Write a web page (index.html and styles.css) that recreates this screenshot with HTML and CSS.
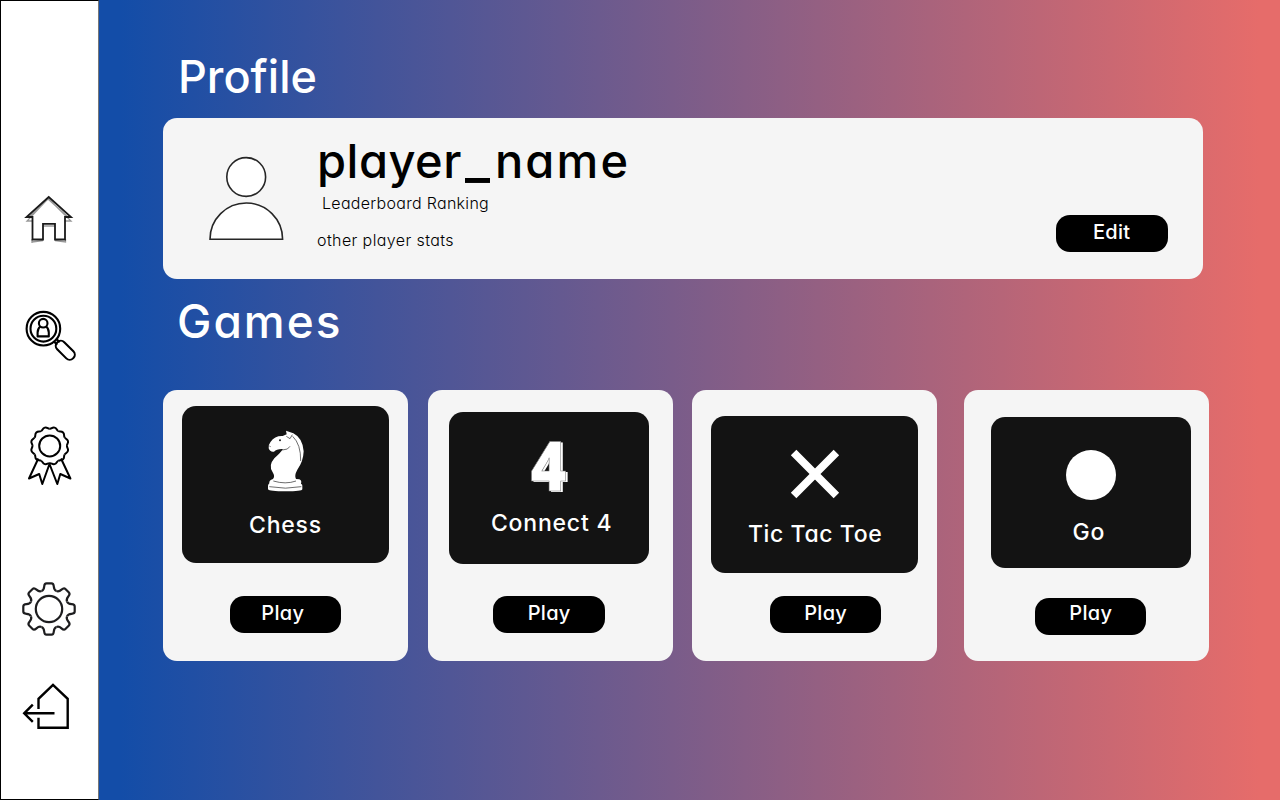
FILE: index.html
```html
<!DOCTYPE html>
<html lang="en">
<head>
<meta charset="utf-8">
<title>Profile</title>
<link rel="stylesheet" href="styles.css">
</head>
<body>
<nav class="sidebar">
  <a class="nav-home"><svg width="50" height="50" viewBox="24 195 50 50"><g fill="none" stroke="#999" stroke-width="1.300"><path d="M48.700 198 27 221h6M48.700 199 71 221h-6M32 242l11-1.500M55 240.500 65.500 242V239M32 239v4M43 226h12M29 217l19-18 20 18"/></g><path d="M48.700 197 71 217H65V239.500H55V223.800H43V239.500H32.500V217H26.500Z" fill="none" stroke="#1a1a1a" stroke-width="1.800"/></svg></a>
  <a class="nav-search"><svg width="54" height="54" viewBox="24 309 54 54"><g fill="none" stroke="#000" stroke-width="2.100"><circle cx="43.400" cy="328.700" r="16.800"/><circle cx="43.400" cy="328.700" r="12.900"/><circle cx="43.200" cy="323.200" r="4.300"/><path d="M40.300 326.500Q37.600 328.600 37.600 332.500V336.400H48.800V332.500Q48.800 328.600 46.100 326.500" stroke-linejoin="round"/><rect x="58" y="-5" width="22.500" height="10" rx="4.800" transform="translate(15.600 300.600) rotate(45) translate(1 0)"/><path d="M54.200 341.800l3 3M56.700 339.300l3 3"/></g></svg></a>
  <a class="nav-awards"><svg width="46" height="62" viewBox="27 425 46 62"><defs><path id="scallop" d="M-4.480-16.700C-2.500-16.900-2.600-18.900 0-18.900S2.500-16.900 4.480-16.700"/></defs><g fill="none" stroke="#000" stroke-width="2" stroke-linejoin="round"><circle cx="49.700" cy="445.900" r="10.500"/><g transform="translate(49.700 445.900)"><use href="#scallop" transform="rotate(15)"/><use href="#scallop" transform="rotate(45)"/><use href="#scallop" transform="rotate(75)"/><use href="#scallop" transform="rotate(105)"/><use href="#scallop" transform="rotate(135)"/><use href="#scallop" transform="rotate(165)"/><use href="#scallop" transform="rotate(195)"/><use href="#scallop" transform="rotate(225)"/><use href="#scallop" transform="rotate(255)"/><use href="#scallop" transform="rotate(285)"/><use href="#scallop" transform="rotate(315)"/><use href="#scallop" transform="rotate(345)"/></g><path d="M38.300 458.500 29 478.500 39.200 474 42.300 484 49.500 464 57.300 484 60.300 474 70.400 478.500 61 458.500"/></g></svg></a>
  <a class="nav-settings"><svg width="56" height="56" viewBox="-28 -28 56 56"><defs><path id="tooth" d="M-7.460-18.020C-5.500-18.800-5-20-4.800-22.500Q-4.600-25.700-2.500-25.700H2.500Q4.600-25.700 4.800-22.500C5-20 5.500-18.800 7.460-18.020"/></defs><g fill="none" stroke="#1d1d1f" stroke-width="2.200"><circle r="13.200"/><use href="#tooth"/><use href="#tooth" transform="rotate(45)"/><use href="#tooth" transform="rotate(90)"/><use href="#tooth" transform="rotate(135)"/><use href="#tooth" transform="rotate(180)"/><use href="#tooth" transform="rotate(225)"/><use href="#tooth" transform="rotate(270)"/><use href="#tooth" transform="rotate(315)"/></g></svg></a>
  <a class="nav-exit"><svg width="50" height="50" viewBox="21 681 50 50"><path d="M38.500 709V698.800L53 684.800 67.700 698.800V727.800H38.500V717.800M54.500 713.300H24.500M32.800 704.700 24.200 713.300 32.800 721.900" fill="none" stroke="#000" stroke-width="2.400"/></svg></a>
</nav>
<main class="content">
  <h1 class="heading heading-profile">Profile</h1>
  <section class="profile">
    <svg class="avatar" width="76" height="86" viewBox="208 155 76 86"><g fill="#fff" stroke="#262626" stroke-width="1.600"><circle cx="246.200" cy="177" r="19.400"/><path d="M210 239.300A36.300 36.300 0 0 1 282.600 239.300Z"/></g></svg>
    <div class="info">
      <div class="name">player<span class="underscore">_</span><span class="name-end">name</span></div>
      <div class="ranking">Leaderboard Ranking</div>
      <div class="stats">other player stats</div>
    </div>
    <button class="button edit">Edit</button>
  </section>
  <h2 class="heading heading-games">Games</h2>
  <section class="games">
    <article class="card chess">
      <div class="tile">
        <svg width="39" height="64" viewBox="78 28 117 192"><g fill="#fff"><path d="M138 33 160 41Q188 55 191 95Q190 126 172 150Q162 168 168 178L178 179Q186 182 183 192Q188 194 187 199V209Q186 215 137 215T84 209V199Q84 194 88 191Q86 182 99 178Q106 170 98 158Q84 138 103 116Q123 98 129 88Q110 87 102 96Q90 98 86 86Q84 76 92 66Q104 48 128 49L140 44Z"/></g><g fill="none" stroke="#222" stroke-width="2"><path d="M158 50Q183 74 182 124M157 45 150 57 139 50M127 91 142 88 150 80M88 79 92 81M100 184Q137 195 168 184M88 201Q137 210 184 201"/></g><circle cx="120" cy="62" r="3" fill="#222"/></svg>
        <div class="title">Chess</div>
      </div>
      <button class="button">Play</button>
    </article>
    <article class="card connect">
      <div class="tile">
        <svg class="digit" width="39" height="52" viewBox="530 441 39 52"><g class="four"><text x="532.500" y="492" textLength="36" lengthAdjust="spacingAndGlyphs">4</text><text class="four-face" x="530.500" y="490.500" textLength="36" lengthAdjust="spacingAndGlyphs">4</text></g></svg>
        <div class="title">Connect 4</div>
      </div>
      <button class="button">Play</button>
    </article>
    <article class="card tictactoe">
      <div class="tile">
        <svg width="50" height="50" viewBox="790 449 50 50"><path d="M793.600 452.600 836.400 495.400M836.400 452.600 793.600 495.400" stroke="#fff" stroke-width="7.800"/></svg>
        <div class="title">Tic Tac Toe</div>
      </div>
      <button class="button">Play</button>
    </article>
    <article class="card go">
      <div class="tile">
        <svg width="50" height="50" viewBox="0 0 50 50"><circle cx="25" cy="25" r="25" fill="#fff"/></svg>
        <div class="title">Go</div>
      </div>
      <button class="button">Play</button>
    </article>
  </section>
</main>
</body>
</html>
```
FILE: styles.css
```css
* { box-sizing: border-box; }
body {
  margin: 0;
  height: 800px;
  display: flex;
  overflow: hidden;
  font-family: Inter, "Noto Sans", sans-serif;
  font-feature-settings: "cv11";
  background: linear-gradient(90deg, #134da8 120px, #e66c6a 1260px);
}
svg { display: block; flex: none; }
.sidebar {
  width: 99px;
  height: 800px;
  background: #fff;
  border: 1px solid #000;
  border-right-color: #777;
  display: flex;
  flex-direction: column;
}
.nav-home { margin: 194px 0 0 23px; }
.nav-search { margin: 64px 0 0 23px; }
.nav-awards { margin: 62px 0 0 26px; }
.nav-settings { margin: 94px 0 0 20px; }
.nav-exit { margin: 44px 0 0 20px; }
.content { padding: 47px 0 0 64px; width: 1181px; }
.heading {
  margin: 0;
  height: 60px;
  font-size: 45px;
  line-height: 60px;
  font-weight: 500;
  color: #fff;
}
.heading-profile { padding-left: 15px; letter-spacing: 0; }
.heading-games { margin-top: 12px; padding-left: 14px; font-size: 46px; letter-spacing: 2px; }
.profile {
  width: 1040.400px;
  height: 161px;
  margin-top: 11px;
  display: flex;
  align-items: flex-start;
  background: #f5f5f5;
  border-radius: 14px;
}
.avatar { margin: 37px 0 0 45px; }
.info { padding: 18px 0 0 33px; width: 772px; white-space: nowrap; color: #000; }
.name { height: 50px; font-size: 47px; line-height: 50px; font-weight: 500; letter-spacing: .5px; }
.underscore { margin: 0 5px 0 3px; font-size: 54px; line-height: 0; letter-spacing: 0; }
.name-end { letter-spacing: 2.200px; }
.ranking { margin: 7px 0 0 5px; font-size: 16px; line-height: 20px; font-weight: 300; letter-spacing: .3px; }
.stats { margin-top: 17px; font-size: 16px; line-height: 20px; font-weight: 300; letter-spacing: .4px; }
.button {
  display: block;
  width: 111.500px;
  height: 37px;
  padding: 0 0 3px;
  border: 0;
  border-radius: 14px;
  background: #000;
  color: #fff;
  font: 500 20px/34px Inter, "Noto Sans", sans-serif;
  font-feature-settings: "cv11";
  letter-spacing: .3px;
}
.edit { margin-top: 97px; }
.games { display: flex; margin-top: 39px; }
.card {
  width: 245px;
  height: 271px;
  flex: none;
  background: #f5f5f5;
  border-radius: 14px;
}
.tile {
  display: flex;
  flex-direction: column;
  background: #131313;
  border-radius: 14px;
  color: #fff;
}
.title { font-size: 23px; line-height: 30px; font-weight: 500; white-space: nowrap; letter-spacing: .8px; }
.chess { padding: 16px 0 0 19px; }
.chess .tile { width: 207px; height: 157px; padding: 23px 0 0 84px; }
.chess .title { margin: 17px 0 0 -17px; }
.chess .button { margin: 33px 0 0 47.500px; padding-right: 5px; }
.connect { margin-left: 20px; padding: 22px 0 0 21.400px; }
.connect .tile { width: 200px; height: 152px; padding: 29px 0 0 80.500px; }
.connect .title { margin: 15px 0 0 -39px; }
.connect .button { margin: 32px 0 0 44px; }
.tictactoe { margin-left: 19.400px; padding: 26px 0 0 19px; }
.tictactoe .tile { width: 206.500px; height: 157px; padding: 33px 0 0 78.600px; }
.tictactoe .title { margin: 20px 0 0 -42px; letter-spacing: .6px; }
.tictactoe .button { margin: 23px 0 0 58.500px; }
.go { margin-left: 27px; padding: 27px 0 0 26.600px; }
.go .tile { width: 200px; height: 151.400px; padding: 33px 0 0 75px; }
.go .title { margin: 16.500px 0 0 6.500px; }
.go .button { margin: 29.600px 0 0 44px; height: 37.500px; padding-bottom: 7px; line-height: 30px; }
.digit { overflow: visible; }
.four { font: 800 69px "Open Sans", sans-serif; fill: #fff; }
.four-face { stroke: #777; stroke-width: .6px; }
```
